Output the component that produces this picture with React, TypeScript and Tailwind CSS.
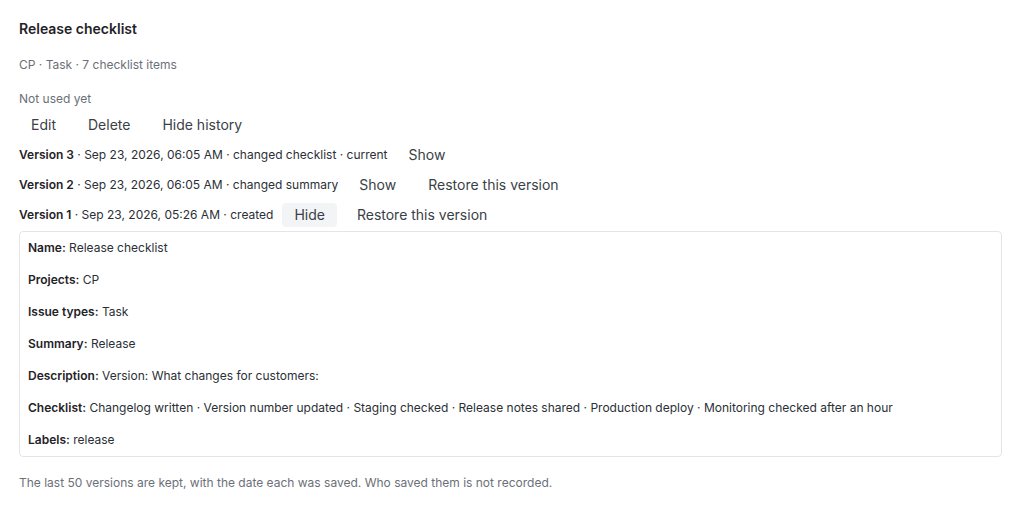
const font = { fontFamily: "Inter, 'Noto Sans', sans-serif" };

function Btn({ label, active }: { label: string; active?: boolean }) {
  return (
    <button
      className={
        "h-6 px-3 rounded text-[14px] leading-6 text-[#3a3f47] " +
        (active ? "bg-[#f3f4f5]" : "bg-transparent")
      }
    >
      {label}
    </button>
  );
}

const versions = [
  { n: 3, date: "Sep 23, 2026, 06:05 AM", note: "changed checklist · current", actions: ["Show"] },
  { n: 2, date: "Sep 23, 2026, 06:05 AM", note: "changed summary", actions: ["Show", "Restore this version"] },
  { n: 1, date: "Sep 23, 2026, 05:26 AM", note: "created", actions: ["Hide", "Restore this version"], open: true },
];

const fields: [string, string][] = [
  ["Name", "Release checklist"],
  ["Projects", "CP"],
  ["Issue types", "Task"],
  ["Summary", "Release"],
  ["Description", "Version: What changes for customers:"],
  [
    "Checklist",
    "Changelog written · Version number updated · Staging checked · Release notes shared · Production deploy · Monitoring checked after an hour",
  ],
  ["Labels", "release"],
];

export default function App() {
  return (
    <div className="min-h-screen bg-white px-[19px] pt-[19px]" style={font}>
      <h1 className="text-[14px] leading-5 font-semibold text-[#1f2328]">Release checklist</h1>
      <p className="mt-[18px] text-[12px] leading-4 text-[#6b7078]">CP · Task · 7 checklist items</p>
      <p className="mt-[18px] text-[12px] leading-4 text-[#6b7078]">Not used yet</p>
      <div className="mt-[6px] flex gap-2">
        <Btn label="Edit" />
        <Btn label="Delete" />
        <Btn label="Hide history" />
      </div>

      {versions.map((v) => (
        <div key={v.n} className="mt-[6px] flex items-center gap-2">
          <span className="mr-px text-[12px] leading-4 text-[#2b2f36]">
            <span className="font-semibold text-[#1f2328]">Version {v.n}</span> · {v.date} · {v.note}
          </span>
          {v.actions.map((a) => (
            <Btn key={a} label={a} active={v.open && a === "Hide"} />
          ))}
        </div>
      ))}

      <div className="mt-[4px] w-[983px] rounded border border-[#e3e5e8] p-2 flex flex-col gap-4">
        {fields.map(([k, val]) => (
          <p key={k} className="text-[12px] leading-4 text-[#2b2f36]">
            <span className="font-semibold text-[#1f2328]">{k}:</span> {val}
          </p>
        ))}
      </div>

      <p className="mt-[18px] text-[12px] leading-4 text-[#6b7078]">
        The last 50 versions are kept, with the date each was saved. Who saved them is not recorded.
      </p>
    </div>
  );
}
